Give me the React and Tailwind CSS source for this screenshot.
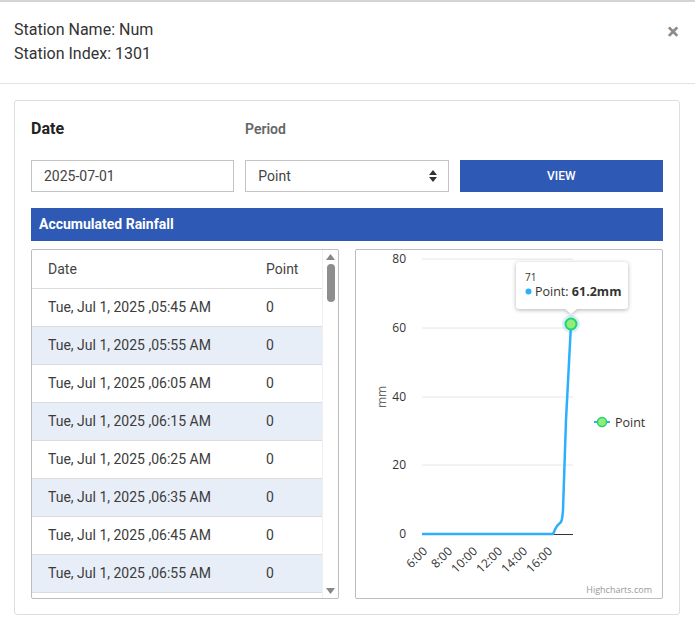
import React from 'react';

const rows=[
  '05:45 AM','05:55 AM','06:05 AM','06:15 AM','06:25 AM','06:35 AM','06:45 AM','06:55 AM'
];

const ticks=[['6:00',69],['8:00',94],['10:00',119],['12:00',144],['14:00',169],['16:00',194]];
const yTicks=[[80,9],[60,78],[40,147],[20,215],[0,284]];

const Chart=()=> (
  <svg width="306" height="348" className="block" style={{fontFamily: '"Open Sans","Noto Sans",sans-serif'}}>
    {yTicks.map(([v,y])=> (
      <g key={v}>
        {v!==0 && <line x1="66" x2="217" y1={y} y2={y} stroke="#e6e6e6" strokeWidth="1" />}
        <text x="50" y={y+4} textAnchor="end" fontSize="12" fill="#333">{v}</text>
      </g>
    ))}
    <text x="26" y="147" fontSize="12" fill="#666" textAnchor="middle" transform="rotate(-90 26 147)" dy="4">mm</text>
    <line x1="66" x2="217" y1="284.5" y2="284.5" stroke="#333" strokeWidth="1" />
    {ticks.map(([t,x])=> (
      <text key={t} x={x+3} y="302" fontSize="12" fill="#333" textAnchor="end" transform={`rotate(-45 ${x+3} 302)`}>{t}</text>
    ))}
    <path d="M66 284 L197 284 C199 280 200 276 203 274 C205 272 206 273 207 260 L210 170 L215 74" fill="none" stroke="#2caffe" strokeWidth="2.5" strokeLinejoin="round" />
    <circle cx="215" cy="74" r="9" fill="#2caffe" opacity="0.2" />
    <circle cx="215" cy="74" r="5.5" fill="#90ed7d" stroke="#22d36a" strokeWidth="2" />
    <g style={{filter: 'drop-shadow(0 1px 2px rgba(0,0,0,0.3))'}}>
      <path d="M163 12 H269 Q272 12 272 15 V56 Q272 59 269 59 H221 L215 64 L209 59 H163 Q160 59 160 56 V15 Q160 12 163 12 Z" fill="#fff" />
    </g>
    <text x="169" y="31" fontSize="10" fill="#333">71</text>
    <circle cx="172.5" cy="41.5" r="3" fill="#2caffe" />
    <text x="179" y="46" fontSize="12.5" fill="#333">Point: <tspan fontWeight="700">61.2mm</tspan></text>
    <line x1="238" x2="254" y1="172" y2="172" stroke="#2caffe" strokeWidth="2" />
    <circle cx="246" cy="172" r="4.5" fill="#90ed7d" stroke="#22d36a" strokeWidth="1.5" />
    <text x="259" y="177" fontSize="12.5" fill="#333">Point</text>
    <text x="296" y="343" fontSize="9" fill="#999" textAnchor="end">Highcharts.com</text>
  </svg>
);

const App=()=> {
  return (
    <div className="w-[695px] h-[618px] bg-white border-t-2 border-[#d4d4d4] text-[#333] overflow-hidden" style={{fontFamily: 'Roboto,"Liberation Sans",sans-serif'}}>
      <div className="flex justify-between items-start pl-[14px] pr-4 pt-[16px] h-[82px] border-b border-[#e2e2e2]">
        <div className="text-[16px] leading-[24px]">
          <div>Station Name: Num</div>
          <div>Station Index: 1301</div>
        </div>
        <button className="text-[#8a8a8a] text-[22px] font-bold leading-none mt-[3px]">×</button>
      </div>

      <div className="mt-[16px] ml-[14px] w-[666px] h-[515px] border border-[#dedede] rounded-[3px] pl-[16px] pr-[16px] pt-[17px]">
        <div className="flex items-center h-[22px]">
          <div className="w-[214px] text-[16px] font-bold text-[#222]">Date</div>
          <div className="text-[14px] font-semibold text-[#666] mt-[1px]">Period</div>
        </div>
        <div className="flex gap-[11px] mt-[20px]">
          <div className="w-[204px] h-[32px] border border-[#c4c4c4] flex items-center pl-[12px] text-[14px] text-[#444]">2025-07-01</div>
          <div className="w-[204px] h-[32px] border border-[#c4c4c4] flex items-center justify-between pl-[12px] pr-[11px] text-[14px] text-[#444]">
            <span>Point</span>
            <svg width="8" height="12" viewBox="0 0 8 12"><path d="M4 0 L8 5 H0 Z M0 7 H8 L4 12 Z" fill="#333" /></svg>
          </div>
          <button className="w-[204px] h-[32px] bg-[#2e59b5] text-white text-[12px] font-medium">VIEW</button>
        </div>
        <div className="mt-[16px] h-[33px] bg-[#2e59b5] text-white text-[14px] font-bold flex items-center pl-[8px]">Accumulated Rainfall</div>
        <div className="flex gap-[16px] mt-[8px]">
          <div className="w-[308px] h-[350px] border border-[#bdbdbd] rounded-[2px] flex overflow-hidden">
            <div className="w-[291px] h-full overflow-hidden">
              <div className="h-[39px] flex items-center text-[14px] text-[#444] border-b border-[#dcdcdc]">
                <div className="w-[234px] pl-[16px]">Date</div>
                <div>Point</div>
              </div>
              {rows.map((r,i)=> (
                <div key={r} className={`h-[38px] flex items-center text-[14px] text-[#3c3c3c] border-b border-[#dcdcdc] ${i%2===1 ? 'bg-[#e8eef8]' : 'bg-white'}`}>
                  <div className="w-[234px] pl-[16px]">Tue, Jul 1, 2025 ,{r}</div>
                  <div>0</div>
                </div>
              ))}
            </div>
            <div className="w-[16px] h-full flex flex-col items-center pt-[4px] pb-[4px] border-l border-[#f0f0f0]">
              <svg width="9" height="6" viewBox="0 0 9 6"><path d="M4.5 0 L9 6 H0 Z" fill="#888" /></svg>
              <div className="w-[8px] h-[38px] bg-[#8e8e8e] rounded-full mt-[4px]" />
              <div className="flex-1" />
              <svg width="9" height="6" viewBox="0 0 9 6"><path d="M0 0 H9 L4.5 6 Z" fill="#888" /></svg>
            </div>
          </div>
          <div className="w-[308px] h-[350px] border border-[#bdbdbd] rounded-[2px]">
            <Chart />
          </div>
        </div>
      </div>
    </div>
  );
};

export default App;
